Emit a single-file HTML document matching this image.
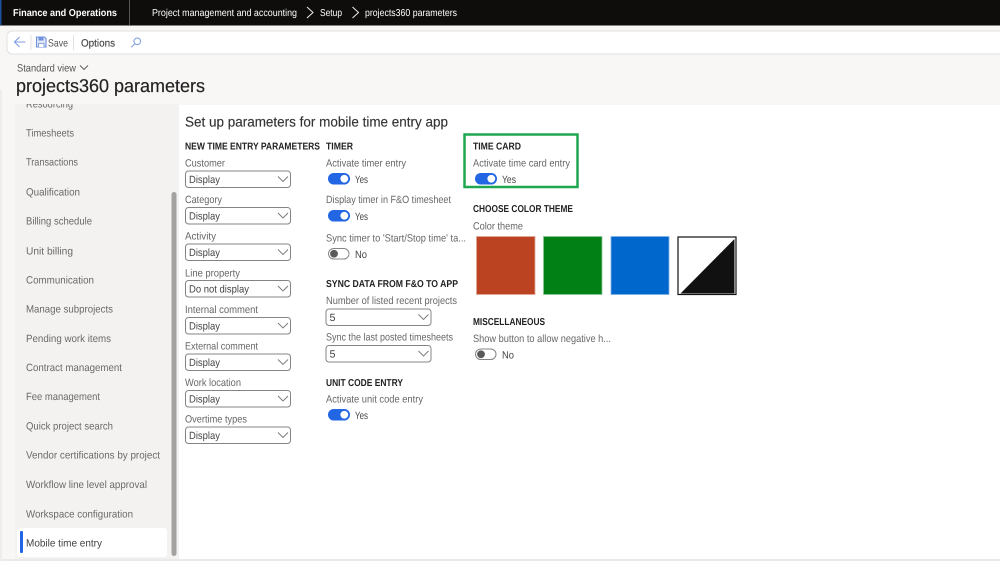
<!DOCTYPE html>
<html><head><meta charset="utf-8"><title>projects360 parameters</title>
<style>
html,body{margin:0;padding:0;background:#f8f7f6;width:1000px;height:561px;overflow:hidden}
svg{display:block;position:absolute;left:0;top:0}
text{font-family:"Liberation Sans",sans-serif;font-size:10px;fill:#333;filter:blur(.3px)}
.n{fill:#6b6a69;font-size:10.500px;transform:translateY(-.5px)}
.l{fill:#686766;font-size:10.500px;transform:translateY(-.5px)}
.h{fill:#222;font-size:10px;font-weight:bold;transform:translateY(-.3px)}
.v{fill:#444;font-size:10.500px;transform:translateY(-.2px)}
.w{fill:#fff;font-size:10px}
</style></head><body>
<svg width="1000" height="561" viewBox="0 0 1000 561" xmlns="http://www.w3.org/2000/svg" text-rendering="geometricPrecision">
<defs>
<g id="sel"><rect x=".5" y=".5" width="105" height="16.500" rx="3" fill="#fff" stroke="#858483" stroke-width="1"/><path d="M93 6l5 5 5-5" fill="none" stroke="#777" stroke-width=".9"/></g>
<g id="on"><rect x="0" y="0" width="22" height="11.500" rx="5.750" fill="#2266e3"/><circle cx="16.300" cy="5.750" r="3.900" fill="#fff"/></g>
<g id="off"><rect x=".5" y=".5" width="20.500" height="10.500" rx="5.250" fill="#fff" stroke="#858483"/><circle cx="6" cy="5.750" r="3.900" fill="#5a5a5a"/></g>
</defs>

<rect width="1000" height="561" fill="#f8f7f6"/>
<rect x="0" y="0" width="1000" height="25.500" fill="#0e0d0c"/>
<rect x="0" y="0" width="1.500" height="25" fill="#1d4f9c"/>
<rect x="129" y="0" width="1" height="25" fill="#555"/>
<text class="w" x="13" y="16" textLength="104" lengthAdjust="spacingAndGlyphs" style="font-weight:bold">Finance and Operations</text>
<text class="w" x="152" y="16" textLength="145" lengthAdjust="spacingAndGlyphs">Project management and accounting</text>
<path d="M307 7l6 5.500-6 5.500" fill="none" stroke="#eee" stroke-width="1"/>
<text class="w" x="320" y="16" textLength="22" lengthAdjust="spacingAndGlyphs">Setup</text>
<path d="M352.500 7l6 5.500-6 5.500" fill="none" stroke="#eee" stroke-width="1"/>
<text class="w" x="365" y="16" textLength="92" lengthAdjust="spacingAndGlyphs">projects360 parameters</text>

<rect x="7" y="31" width="1000" height="23" rx="5" fill="#fff" stroke="#e2e1e0" stroke-width="1"/>
<path d="M14.500 42h11M19.500 37l-5 5 5 5" fill="none" stroke="#7d9be0" stroke-width="1.100"/>
<rect x="30.500" y="35" width="1" height="15" fill="#e3e2e1"/>
<path d="M36.500 37h8l1.500 1.500v8.500h-9.500z" fill="#dfe6f7" stroke="#6f90dd" stroke-width="1.100"/>
<path d="M38.500 37.500h5v3h-5z" fill="#6f90dd"/>
<path d="M38.500 47v-3.500h5.500v3.500" fill="#fff" stroke="#6f90dd" stroke-width=".8"/>
<text x="48" y="46.500" textLength="20" lengthAdjust="spacingAndGlyphs" style="fill:#555;font-size:10.500px">Save</text>
<rect x="73" y="35" width="1" height="15" fill="#e3e2e1"/>
<text x="81" y="46.500" textLength="34" lengthAdjust="spacingAndGlyphs" style="fill:#444;font-size:10.500px;stroke:#444;stroke-width:.15">Options</text>
<circle cx="137.300" cy="41.300" r="3.300" fill="none" stroke="#7d9be0" stroke-width="1"/>
<path d="M134.800 43.800l-3.500 3.500" fill="none" stroke="#7d9be0" stroke-width="1"/>

<text x="17" y="71.500" textLength="59" lengthAdjust="spacingAndGlyphs" style="fill:#555;font-size:10.500px">Standard view</text>
<path d="M80 65.500l4 4 4-4" fill="none" stroke="#555" stroke-width=".9"/>
<text x="16" y="92" textLength="189" lengthAdjust="spacingAndGlyphs" style="fill:#222;font-size:18.500px;stroke:#222;stroke-width:.2">projects360 parameters</text>

<rect x="179" y="105" width="821" height="454" fill="#fff"/>
<path d="M15 559V108a4 4 0 0 1 4-4H179V559z" fill="#f3f2f1"/>
<rect x="0" y="559" width="1000" height="2" fill="#eceae8"/>
<rect x="0" y="90" width="2" height="471" fill="#eeedeb"/>

<svg x="15" y="104" width="164" height="455" viewBox="15 104 164 455">
<text class="n" x="26" y="108" textLength="47" lengthAdjust="spacingAndGlyphs">Resourcing</text>
</svg>
<text class="n" x="26" y="137" textLength="48" lengthAdjust="spacingAndGlyphs">Timesheets</text>
<text class="n" x="26" y="166" textLength="52" lengthAdjust="spacingAndGlyphs">Transactions</text>
<text class="n" x="26" y="196" textLength="54" lengthAdjust="spacingAndGlyphs">Qualification</text>
<text class="n" x="26" y="225" textLength="66" lengthAdjust="spacingAndGlyphs">Billing schedule</text>
<text class="n" x="26" y="255" textLength="47" lengthAdjust="spacingAndGlyphs">Unit billing</text>
<text class="n" x="26" y="284" textLength="68" lengthAdjust="spacingAndGlyphs">Communication</text>
<text class="n" x="26" y="313" textLength="87" lengthAdjust="spacingAndGlyphs">Manage subprojects</text>
<text class="n" x="26" y="342.500" textLength="85" lengthAdjust="spacingAndGlyphs">Pending work items</text>
<text class="n" x="26" y="371.500" textLength="96" lengthAdjust="spacingAndGlyphs">Contract management</text>
<text class="n" x="26" y="400.500" textLength="74" lengthAdjust="spacingAndGlyphs">Fee management</text>
<text class="n" x="26" y="430" textLength="87" lengthAdjust="spacingAndGlyphs">Quick project search</text>
<text class="n" x="26" y="459" textLength="134" lengthAdjust="spacingAndGlyphs">Vendor certifications by project</text>
<text class="n" x="26" y="488.500" textLength="121" lengthAdjust="spacingAndGlyphs">Workflow line level approval</text>
<text class="n" x="26" y="518" textLength="107" lengthAdjust="spacingAndGlyphs">Workspace configuration</text>
<rect x="17" y="528" width="150" height="29" rx="3" fill="#fff"/>
<rect x="20" y="531" width="3" height="22" rx="1" fill="#2266e3"/>
<text x="26" y="546.500" textLength="76" lengthAdjust="spacingAndGlyphs" style="fill:#444;font-size:10.500px">Mobile time entry</text>
<rect x="171.500" y="192" width="5" height="364" rx="2.500" fill="#a3a2a1"/>

<text x="185" y="126.500" textLength="263" lengthAdjust="spacingAndGlyphs" style="fill:#333;font-size:14px;stroke:#333;stroke-width:.15">Set up parameters for mobile time entry app</text>

<text class="h" x="185" y="150" textLength="135" lengthAdjust="spacingAndGlyphs">NEW TIME ENTRY PARAMETERS</text>
<text class="l" x="185" y="167" textLength="40" lengthAdjust="spacingAndGlyphs">Customer</text>
<use href="#sel" x="185" y="170.500"/><text class="v" x="189" y="183" textLength="31" lengthAdjust="spacingAndGlyphs">Display</text>
<text class="l" x="185" y="203.500" textLength="37" lengthAdjust="spacingAndGlyphs">Category</text>
<use href="#sel" x="185" y="207"/><text class="v" x="189" y="219.500" textLength="31" lengthAdjust="spacingAndGlyphs">Display</text>
<text class="l" x="185" y="240" textLength="31" lengthAdjust="spacingAndGlyphs">Activity</text>
<use href="#sel" x="185" y="243.500"/><text class="v" x="189" y="256" textLength="31" lengthAdjust="spacingAndGlyphs">Display</text>
<text class="l" x="185" y="277" textLength="55" lengthAdjust="spacingAndGlyphs">Line property</text>
<use href="#sel" x="185" y="280"/><text class="v" x="189" y="292.500" textLength="60" lengthAdjust="spacingAndGlyphs">Do not display</text>
<text class="l" x="185" y="313.500" textLength="73" lengthAdjust="spacingAndGlyphs">Internal comment</text>
<use href="#sel" x="185" y="317"/><text class="v" x="189" y="329.500" textLength="31" lengthAdjust="spacingAndGlyphs">Display</text>
<text class="l" x="185" y="350" textLength="73" lengthAdjust="spacingAndGlyphs">External comment</text>
<use href="#sel" x="185" y="353.500"/><text class="v" x="189" y="366" textLength="31" lengthAdjust="spacingAndGlyphs">Display</text>
<text class="l" x="185" y="386.500" textLength="56" lengthAdjust="spacingAndGlyphs">Work location</text>
<use href="#sel" x="185" y="390"/><text class="v" x="189" y="402.500" textLength="31" lengthAdjust="spacingAndGlyphs">Display</text>
<text class="l" x="185" y="423" textLength="62" lengthAdjust="spacingAndGlyphs">Overtime types</text>
<use href="#sel" x="185" y="426.500"/><text class="v" x="189" y="439" textLength="31" lengthAdjust="spacingAndGlyphs">Display</text>

<text class="h" x="326" y="150" textLength="27" lengthAdjust="spacingAndGlyphs">TIMER</text>
<text class="l" x="326" y="167" textLength="80" lengthAdjust="spacingAndGlyphs">Activate timer entry</text>
<use href="#on" x="328" y="173"/><text class="v" x="355" y="183" textLength="13" lengthAdjust="spacingAndGlyphs">Yes</text>
<text class="l" x="326" y="203.500" textLength="125" lengthAdjust="spacingAndGlyphs">Display timer in F&amp;O timesheet</text>
<use href="#on" x="328" y="210"/><text class="v" x="355" y="220" textLength="13" lengthAdjust="spacingAndGlyphs">Yes</text>
<text class="l" x="326" y="242" textLength="140" lengthAdjust="spacingAndGlyphs">Sync timer to 'Start/Stop time' ta...</text>
<use href="#off" x="328" y="248"/><text class="v" x="355" y="258" textLength="12" lengthAdjust="spacingAndGlyphs">No</text>

<text class="h" x="326" y="287.500" textLength="132" lengthAdjust="spacingAndGlyphs">SYNC DATA FROM F&amp;O TO APP</text>
<text class="l" x="326" y="304.500" textLength="131" lengthAdjust="spacingAndGlyphs">Number of listed recent projects</text>
<use href="#sel" x="325.500" y="308.500"/><text class="v" x="329.500" y="321" textLength="6" lengthAdjust="spacingAndGlyphs">5</text>
<text class="l" x="326" y="341" textLength="127" lengthAdjust="spacingAndGlyphs">Sync the last posted timesheets</text>
<use href="#sel" x="325.500" y="345"/><text class="v" x="329.500" y="357.500" textLength="6" lengthAdjust="spacingAndGlyphs">5</text>

<text class="h" x="326" y="386.500" textLength="77" lengthAdjust="spacingAndGlyphs">UNIT CODE ENTRY</text>
<text class="l" x="326" y="403" textLength="97" lengthAdjust="spacingAndGlyphs">Activate unit code entry</text>
<use href="#on" x="328" y="409"/><text class="v" x="355" y="419" textLength="13" lengthAdjust="spacingAndGlyphs">Yes</text>

<rect x="464.500" y="134.500" width="113" height="52.500" fill="none" stroke="#1fa750" stroke-width="2.500"/>
<text class="h" x="473" y="150" textLength="48" lengthAdjust="spacingAndGlyphs">TIME CARD</text>
<text class="l" x="473" y="167" textLength="97" lengthAdjust="spacingAndGlyphs">Activate time card entry</text>
<use href="#on" x="475" y="173"/><text class="v" x="502" y="183" textLength="14" lengthAdjust="spacingAndGlyphs">Yes</text>

<text class="h" x="473" y="212.500" textLength="100" lengthAdjust="spacingAndGlyphs">CHOOSE COLOR THEME</text>
<text class="l" x="473" y="230" textLength="50" lengthAdjust="spacingAndGlyphs">Color theme</text>
<rect x="476.500" y="236.500" width="58.500" height="58" fill="#bc4321" stroke="#e0a595" stroke-width=".8"/>
<rect x="543.500" y="236.500" width="58.500" height="58" fill="#008015" stroke="#8cc696" stroke-width=".8"/>
<rect x="611" y="236.500" width="58" height="58" fill="#0067cc" stroke="#7fb0e4" stroke-width=".8"/>
<rect x="678" y="237" width="58" height="57.500" fill="#fff" stroke="#111" stroke-width="1.200"/>
<path d="M734.500 239v54.500h-54z" fill="#111"/>

<text class="h" x="473" y="325.500" textLength="72" lengthAdjust="spacingAndGlyphs">MISCELLANEOUS</text>
<text class="l" x="473" y="342.500" textLength="138" lengthAdjust="spacingAndGlyphs">Show button to allow negative h...</text>
<use href="#off" x="475" y="348.500"/><text class="v" x="502" y="358.500" textLength="12" lengthAdjust="spacingAndGlyphs">No</text>
</svg>
</body></html>
